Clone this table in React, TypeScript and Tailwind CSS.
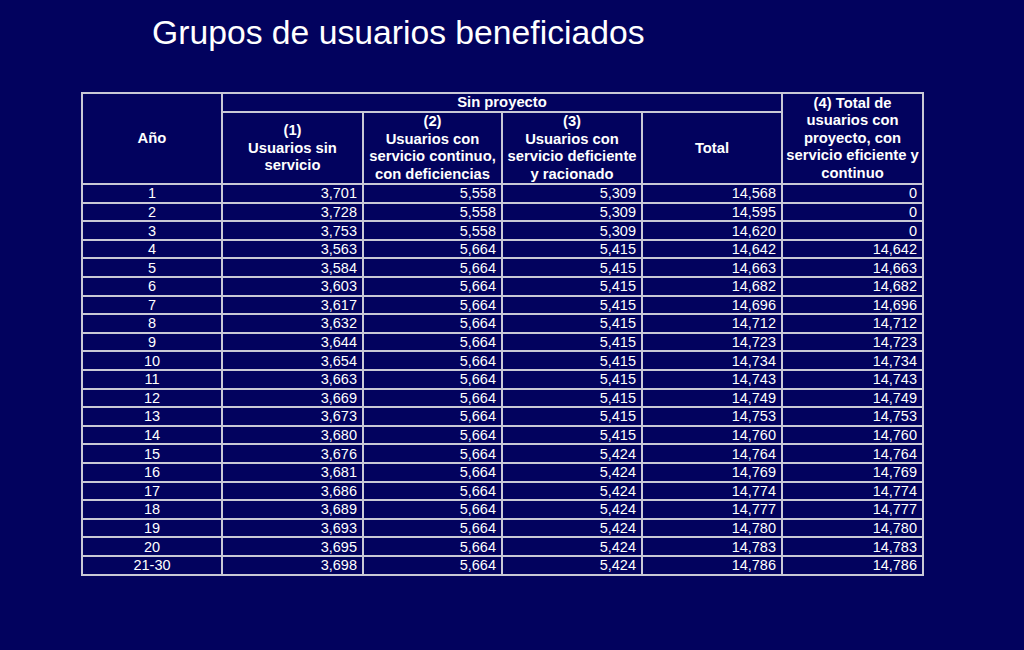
const rows: [string, string, string, string, string, string][] = [
  ["1", "3,701", "5,558", "5,309", "14,568", "0"],
  ["2", "3,728", "5,558", "5,309", "14,595", "0"],
  ["3", "3,753", "5,558", "5,309", "14,620", "0"],
  ["4", "3,563", "5,664", "5,415", "14,642", "14,642"],
  ["5", "3,584", "5,664", "5,415", "14,663", "14,663"],
  ["6", "3,603", "5,664", "5,415", "14,682", "14,682"],
  ["7", "3,617", "5,664", "5,415", "14,696", "14,696"],
  ["8", "3,632", "5,664", "5,415", "14,712", "14,712"],
  ["9", "3,644", "5,664", "5,415", "14,723", "14,723"],
  ["10", "3,654", "5,664", "5,415", "14,734", "14,734"],
  ["11", "3,663", "5,664", "5,415", "14,743", "14,743"],
  ["12", "3,669", "5,664", "5,415", "14,749", "14,749"],
  ["13", "3,673", "5,664", "5,415", "14,753", "14,753"],
  ["14", "3,680", "5,664", "5,415", "14,760", "14,760"],
  ["15", "3,676", "5,664", "5,424", "14,764", "14,764"],
  ["16", "3,681", "5,664", "5,424", "14,769", "14,769"],
  ["17", "3,686", "5,664", "5,424", "14,774", "14,774"],
  ["18", "3,689", "5,664", "5,424", "14,777", "14,777"],
  ["19", "3,693", "5,664", "5,424", "14,780", "14,780"],
  ["20", "3,695", "5,664", "5,424", "14,783", "14,783"],
  ["21-30", "3,698", "5,664", "5,424", "14,786", "14,786"],
]

const cell = "border-2 border-[#c9c9d6] p-0"

export default function App() {
  return (
    <div className="w-[1024px] h-[650px] bg-[#02025e] text-white font-['Liberation_Sans',Arial,sans-serif] overflow-hidden">
      <h1 className="pl-[152px] pt-[12px] text-[33.7px] leading-[40px] font-normal">
        Grupos de usuarios beneficiados
      </h1>
      <table className="ml-[81px] mt-[40px] border-collapse table-fixed w-[841px] text-[14.5px]">
        <colgroup>
          <col className="w-[140px]" />
          <col className="w-[141px]" />
          <col className="w-[139px]" />
          <col className="w-[140px]" />
          <col className="w-[140px]" />
          <col className="w-[141px]" />
        </colgroup>
        <thead className="font-bold text-center text-[14.8px] leading-[17.4px]">
          <tr className="h-[19px]">
            <th rowSpan={2} className={cell}>Año</th>
            <th colSpan={4} className={cell}>Sin proyecto</th>
            <th rowSpan={2} className={`${cell} px-0.5`}>
              (4) Total de usuarios con proyecto, con servicio eficiente y continuo
            </th>
          </tr>
          <tr className="h-[71px]">
            <th className={cell}>
              (1)<br />Usuarios sin<br />servicio
            </th>
            <th className={cell}>
              (2)<br />Usuarios con<br />servicio continuo,<br />con deficiencias
            </th>
            <th className={cell}>
              (3)<br />Usuarios con<br />servicio deficiente<br />y racionado
            </th>
            <th className={cell}>Total</th>
          </tr>
        </thead>
        <tbody className="leading-[14px]">
          {rows.map((r) => (
            <tr key={r[0]} className="h-[18.6px]">
              <td className={`${cell} text-center`}>{r[0]}</td>
              {r.slice(1).map((v, i) => (
                <td key={i} className={`${cell} text-right pr-[5px]`}>{v}</td>
              ))}
            </tr>
          ))}
        </tbody>
      </table>
    </div>
  )
}
